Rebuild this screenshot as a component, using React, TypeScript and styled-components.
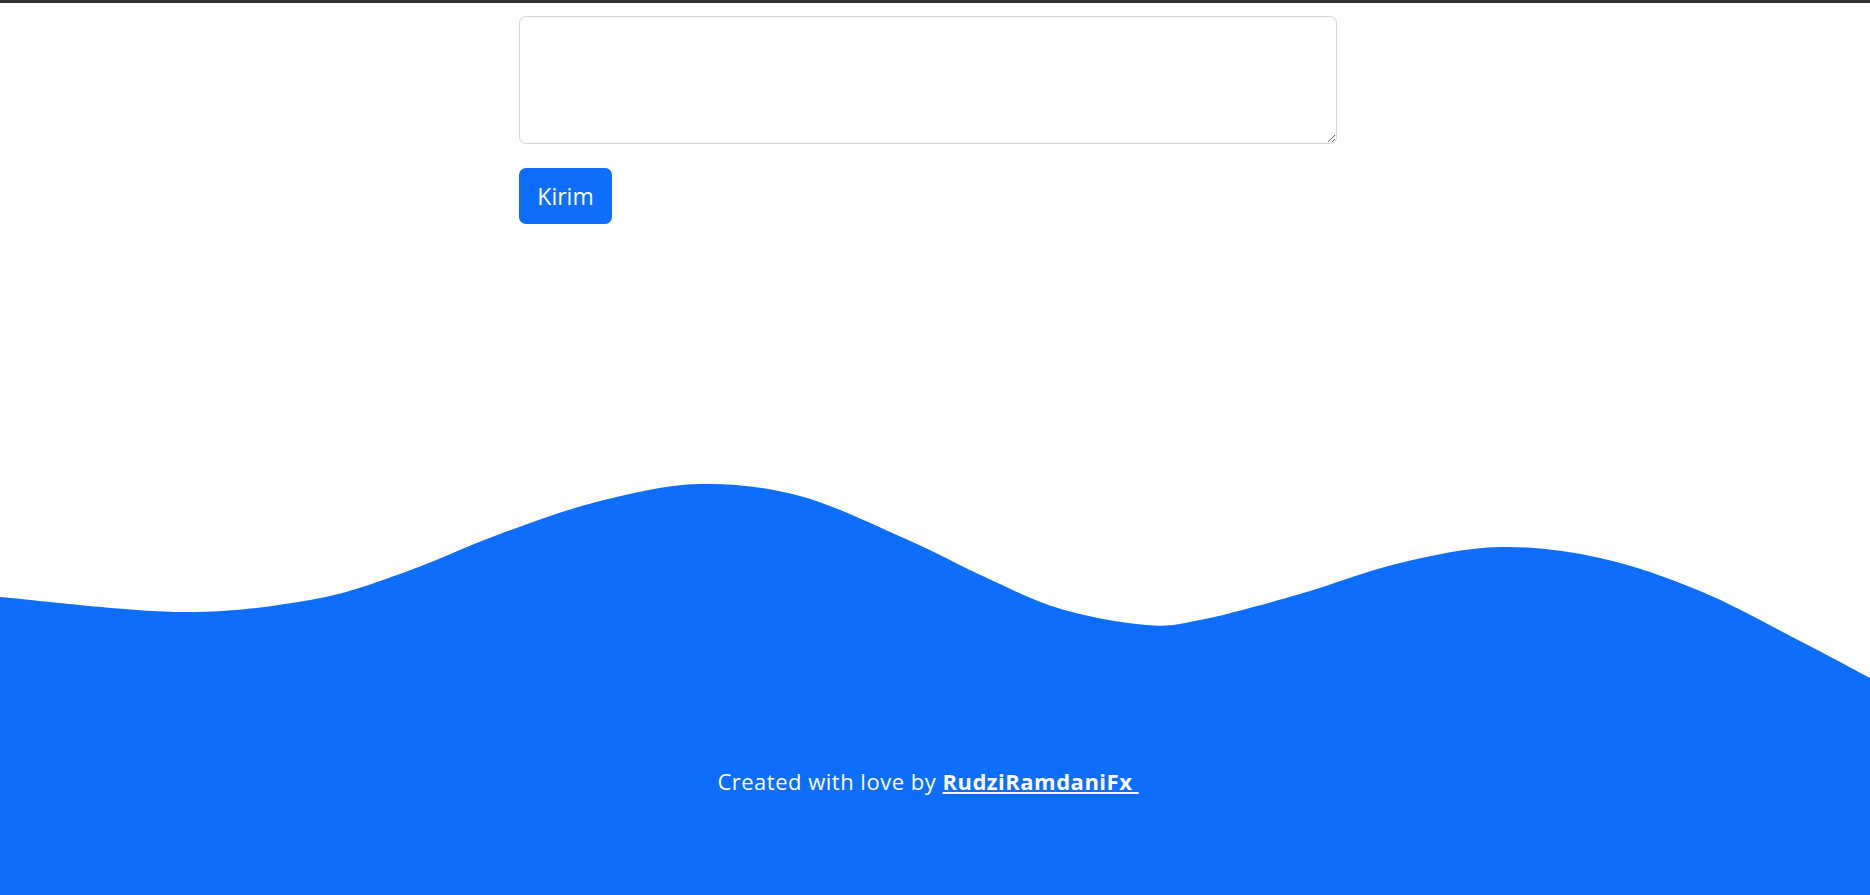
import { createGlobalStyle, styled } from "styled-components";

const GlobalStyle = createGlobalStyle`
  html, body {
    margin: 0;
    padding: 0;
    background: #ffffff;
  }
  body {
    font-family: "Segoe UI", "Open Sans", "Noto Sans", sans-serif;
    color: #212529;
  }
`;

const wavePoints: [number, number][] = [
  [0, 120],
  [180, 135],
  [310, 123],
  [400, 97],
  [500, 57],
  [600, 24],
  [700, 7],
  [800, 19],
  [906, 62],
  [987, 101],
  [1061, 132],
  [1146, 148],
  [1200, 143],
  [1300, 117],
  [1400, 86],
  [1500, 70],
  [1600, 81],
  [1700, 114],
  [1800, 164],
  [1870, 201],
];

const WAVE_W = 1870;
const WAVE_H = 224;

// catmull-rom through the points, turned into cubic curves
const buildWave = (pts: [number, number][]) => {
  let d = `M${pts[0][0]},${pts[0][1]}`;
  for (let i = 0; i < pts.length - 1; i++) {
    const p0 = pts[i - 1] || pts[i];
    const p1 = pts[i];
    const p2 = pts[i + 1];
    const p3 = pts[i + 2] || p2;
    const c1x = p1[0] + (p2[0] - p0[0]) / 6;
    const c1y = p1[1] + (p2[1] - p0[1]) / 6;
    const c2x = p2[0] - (p3[0] - p1[0]) / 6;
    const c2y = p2[1] - (p3[1] - p1[1]) / 6;
    d += `C${c1x.toFixed(1)},${c1y.toFixed(1)},${c2x.toFixed(1)},${c2y.toFixed(1)},${p2[0]},${p2[1]}`;
  }
  return `${d}L${WAVE_W},${WAVE_H}L0,${WAVE_H}Z`;
};

const App = () => {
  return (
    <Page>
      <GlobalStyle />
      <TopBar />
      <Main>
        <Container>
          <MessageInput aria-label="pesan" />
          <SubmitButton type="button">Kirim</SubmitButton>
        </Container>
      </Main>
      <Footer>
        <Wave viewBox={`0 0 ${WAVE_W} ${WAVE_H}`} preserveAspectRatio="none">
          <path d={buildWave(wavePoints)} fill="#0d6efd" />
        </Wave>
        <FooterBody>
          <Container>
            <Credit>
              Created with love by{" "}
              <CreditLink href="#">RudziRamdaniFx&nbsp;</CreditLink>
            </Credit>
          </Container>
        </FooterBody>
      </Footer>
    </Page>
  );
};

export default App;

const Page = styled.div`
  min-height: 100vh;
  display: flex;
  flex-direction: column;
  overflow: hidden;
`;

const TopBar = styled.div`
  height: 3px;
  background: #333333;
`;

const Main = styled.main`
  padding-top: 13px;
`;

const Container = styled.div`
  width: 832px;
  margin: 0 auto;
  padding-right: 14px;
  box-sizing: border-box;
  display: flex;
  flex-direction: column;
  align-items: flex-start;
`;

const MessageInput = styled.textarea`
  display: block;
  width: 100%;
  height: 128px;
  box-sizing: border-box;
  border: 1px solid #ced4da;
  border-radius: 7px;
  padding: 8px 15px;
  font-family: inherit;
  font-size: 20px;
  outline: none;
  resize: vertical;
`;

const SubmitButton = styled.button`
  margin-top: 24px;
  width: 93px;
  height: 56px;
  padding: 0;
  border: none;
  border-radius: 7px;
  background: #0d6efd;
  color: #ffffff;
  font-family: inherit;
  font-size: 23px;
  text-align: center;
  cursor: pointer;
`;

const Footer = styled.footer`
  margin-top: auto;
  display: flex;
  flex-direction: column;
`;

const Wave = styled.svg`
  display: block;
  width: 100%;
  height: ${WAVE_H}px;
`;

const FooterBody = styled.div`
  background: #0d6efd;
  height: 195px;
  padding-top: 65px;
  box-sizing: border-box;
  margin-top: -1px;
`;

const Credit = styled.p`
  margin: 0;
  width: 100%;
  text-align: center;
  color: #ffffff;
  font-size: 22px;
  letter-spacing: 0.5px;
  line-height: 1.5;
`;

const CreditLink = styled.a`
  color: #ffffff;
  font-weight: 700;
  text-decoration: underline;
`;
